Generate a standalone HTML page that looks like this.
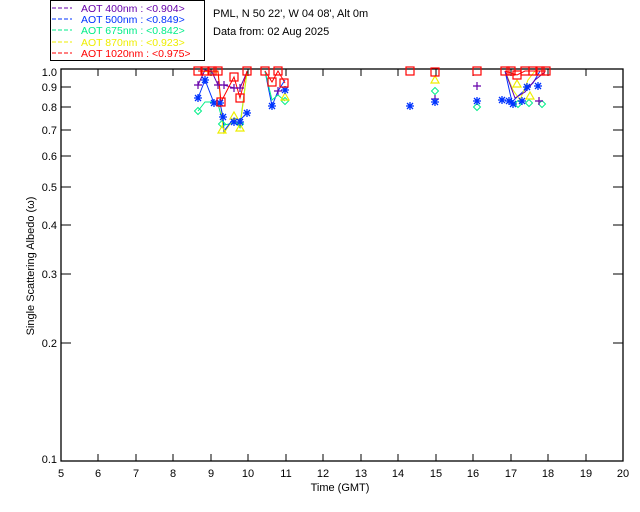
<!DOCTYPE html>
<html><head><meta charset="utf-8"><style>
body{margin:0;background:#fff}
svg{display:block;font-family:"Liberation Sans",sans-serif}
.pre{white-space:pre}
</style></head><body>
<svg width="640" height="512" viewBox="0 0 640 512" xmlns="http://www.w3.org/2000/svg">
<defs>
<g id="sq"><rect x="-4" y="-4" width="8" height="8" fill="none" stroke="#f00" stroke-width="1.2"/></g>
<g id="st" stroke="#0033ff" stroke-width="1.3"><path d="M-4 0H4M0-4V4M-3-3L3 3M-3 3L3-3"/></g>
<g id="pl" stroke="#6600aa" stroke-width="1.2"><path d="M-4 0H4M0-4V4"/></g>
<g id="dm"><path d="M0-3.5L3.5 0 0 3.5-3.5 0Z" fill="none" stroke="#00ee88" stroke-width="1"/></g>
<g id="tr"><path d="M0-4L4 3H-4Z" fill="none" stroke="#eeee00" stroke-width="1.2"/></g>
</defs>
<rect x="50.5" y="0.5" width="154" height="60" fill="#fff" stroke="#000"/>
<g font-size="10.5" class="pre">
<line x1="52" y1="8" x2="72" y2="8" stroke="#6600aa" stroke-dasharray="4 2"/><text x="81" y="12" fill="#6600aa">AOT  400nm : &lt;0.904&gt;</text>
<line x1="52" y1="19" x2="72" y2="19" stroke="#0033ff" stroke-dasharray="4 2"/><text x="81" y="23" fill="#0033ff">AOT  500nm : &lt;0.849&gt;</text>
<line x1="52" y1="30" x2="72" y2="30" stroke="#00ee88" stroke-dasharray="4 2"/><text x="81" y="34" fill="#00ee88">AOT  675nm : &lt;0.842&gt;</text>
<line x1="52" y1="42" x2="72" y2="42" stroke="#eeee00" stroke-dasharray="4 2"/><text x="81" y="46" fill="#eeee00">AOT  870nm : &lt;0.923&gt;</text>
<line x1="52" y1="53" x2="72" y2="53" stroke="#f00" stroke-dasharray="4 2"/><text x="81" y="57" fill="#f00">AOT 1020nm : &lt;0.975&gt;</text>
</g>
<text x="213" y="17" font-size="11">PML, N 50 22', W 04 08', Alt 0m</text>
<text x="213" y="35" font-size="11">Data from: 02 Aug 2025</text>
<rect x="61" y="69" width="562" height="392" fill="none" stroke="#000" stroke-width="1.3"/>
<g stroke="#000" stroke-width="1">
<path d="M98 69v7M136 69v7M173 69v7M211 69v7M248 69v7M286 69v7M323 69v7M361 69v7M398 69v7M436 69v7M473 69v7M511 69v7M548 69v7M586 69v7"/>
<path d="M98 461v-7M136 461v-7M173 461v-7M211 461v-7M248 461v-7M286 461v-7M323 461v-7M361 461v-7M398 461v-7M436 461v-7M473 461v-7M511 461v-7M548 461v-7M586 461v-7"/>
<path d="M61 87h10M61 107h10M61 130h10M61 156h10M61 187h10M61 225h10M61 274h10M61 343h10"/>
<path d="M623 87h-10M623 107h-10M623 130h-10M623 156h-10M623 187h-10M623 225h-10M623 274h-10M623 343h-10"/>
</g>
<g font-size="11" text-anchor="end">
<text x="57" y="76">1.0</text><text x="57" y="91">0.9</text><text x="57" y="111">0.8</text><text x="57" y="134">0.7</text><text x="57" y="160">0.6</text><text x="57" y="191">0.5</text><text x="57" y="229">0.4</text><text x="57" y="278">0.3</text><text x="57" y="347">0.2</text><text x="57" y="463">0.1</text>
</g>
<g font-size="11" text-anchor="middle">
<text x="61" y="477">5</text><text x="98" y="477">6</text><text x="136" y="477">7</text><text x="173" y="477">8</text><text x="211" y="477">9</text><text x="248" y="477">10</text><text x="286" y="477">11</text><text x="323" y="477">12</text><text x="361" y="477">13</text><text x="398" y="477">14</text><text x="436" y="477">15</text><text x="473" y="477">16</text><text x="511" y="477">17</text><text x="548" y="477">18</text><text x="586" y="477">19</text><text x="623" y="477">20</text>
<text x="340" y="491">Time (GMT)</text>
</g>
<text transform="translate(34 266) rotate(-90)" font-size="11" text-anchor="middle">Single Scattering Albedo (ω)</text>
<g fill="none" stroke-width="1">
<polyline stroke="#00ee88" points="198,111 205,102 212,102 218,104 222,119 224,125 234,123 240,125 247,72"/>
<polyline stroke="#eeee00" points="198,71 212,72 218,72 222,120 224,133 234,118 240,128 247,72"/>
<polyline stroke="#6600aa" points="198,85 205,70 212,72 218,85 224,85 234,88 240,88 247,72"/>
<polyline stroke="#0033ff" points="198,98 205,80 214,103 220,103 223,117 224,131 234,118 240,120 247,113"/>
<polyline stroke="#f00" points="198,71 205,71 212,71 218,71 221,102 234,77 240,98 247,71"/>
<polyline stroke="#0033ff" points="265,71 272,106 278,91 285,80"/>
<polyline stroke="#00ee88" points="265,71 272,100 278,95 285,101"/>
<polyline stroke="#f00" points="265,71 272,82 278,71 285,83"/>
<polyline stroke="#0033ff" points="505,71 512,102 518,96 525,90 533,83 540,71"/>
<polyline stroke="#eeee00" points="505,71 513,90 520,100 528,80 535,71"/>
<polyline stroke="#6600aa" points="505,71 515,98 525,92 535,80 545,72"/>
<polyline stroke="#f00" points="505,71 517,75 525,71 546,71"/>
</g>
<g>
<use href="#dm" x="198" y="111"/><use href="#dm" x="222" y="124"/><use href="#dm" x="240" y="124"/><use href="#dm" x="285" y="101"/><use href="#dm" x="435" y="91"/><use href="#dm" x="477" y="107"/><use href="#dm" x="518" y="104"/><use href="#dm" x="529" y="103"/><use href="#dm" x="542" y="104"/>
<use href="#tr" x="222" y="130"/><use href="#tr" x="234" y="116"/><use href="#tr" x="240" y="128"/><use href="#tr" x="285" y="97"/><use href="#tr" x="435" y="80"/><use href="#tr" x="517" y="84"/><use href="#tr" x="530" y="96"/>
<use href="#pl" x="198" y="85"/><use href="#pl" x="218" y="85"/><use href="#pl" x="224" y="85"/><use href="#pl" x="234" y="88"/><use href="#pl" x="240" y="88"/><use href="#pl" x="278" y="91"/><use href="#pl" x="435" y="99"/><use href="#pl" x="477" y="86"/><use href="#pl" x="539" y="101"/>
<use href="#st" x="198" y="98"/><use href="#st" x="205" y="80"/><use href="#st" x="214" y="103"/><use href="#st" x="220" y="103"/><use href="#st" x="223" y="117"/><use href="#st" x="234" y="122"/><use href="#st" x="240" y="122"/><use href="#st" x="247" y="113"/><use href="#st" x="272" y="106"/><use href="#st" x="285" y="90"/><use href="#st" x="410" y="106"/><use href="#st" x="435" y="102"/><use href="#st" x="477" y="101"/><use href="#st" x="502" y="100"/><use href="#st" x="509" y="101"/><use href="#st" x="513" y="104"/><use href="#st" x="522" y="101"/><use href="#st" x="527" y="87"/><use href="#st" x="538" y="86"/>
<use href="#sq" x="198" y="71"/><use href="#sq" x="205" y="71"/><use href="#sq" x="212" y="71"/><use href="#sq" x="218" y="71"/><use href="#sq" x="221" y="102"/><use href="#sq" x="234" y="77"/><use href="#sq" x="240" y="98"/><use href="#sq" x="247" y="71"/><use href="#sq" x="265" y="71"/><use href="#sq" x="272" y="82"/><use href="#sq" x="278" y="71"/><use href="#sq" x="284" y="83"/><use href="#sq" x="410" y="71"/><use href="#sq" x="435" y="72"/><use href="#sq" x="477" y="71"/><use href="#sq" x="505" y="71"/><use href="#sq" x="511" y="71"/><use href="#sq" x="517" y="75"/><use href="#sq" x="525" y="71"/><use href="#sq" x="533" y="71"/><use href="#sq" x="540" y="71"/><use href="#sq" x="546" y="71"/>
</g>
</svg>
</body></html>
